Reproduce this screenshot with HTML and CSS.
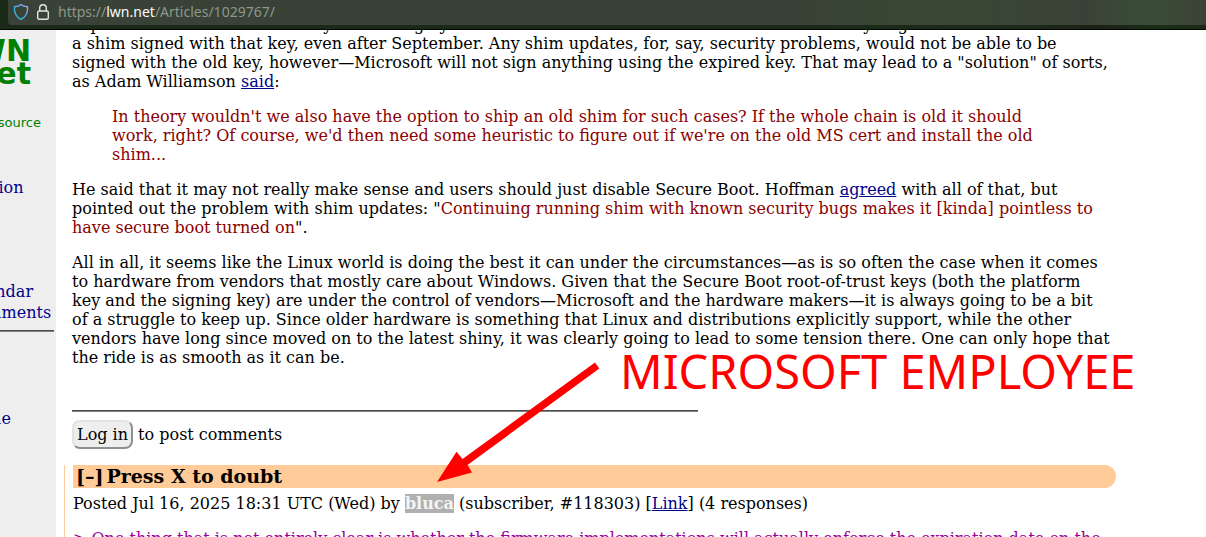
FILE: index.html
```
<!DOCTYPE html>
<html lang="en">
<head>
    <meta charset="UTF-8">
    <meta name="viewport" content="width=device-width, initial-scale=1.0">
    <title>LWN.net</title>
    <link rel="stylesheet" href="styles.css">
</head>
<body>
    <header class="toolbar">
        <div class="urlbar">
            <svg class="shield" width="16" height="18" viewBox="0 0 16 18" fill="none">
                <defs>
                    <linearGradient id="shieldColor" x1="0" y1="1" x2="1" y2="0">
                        <stop offset="0.35" stop-color="#35b5e8"/>
                        <stop offset="1" stop-color="#b09af0"/>
                    </linearGradient>
                </defs>
                <path d="M8 1.5C6.3 3 4 3.6 1.5 3.8C1 9.500 3.200 14 8 16.300C12.800 14 15 9.500 14.500 3.800C12 3.600 9.700 3 8 1.500Z" stroke="url(#shieldColor)" stroke-width="1.4" stroke-linejoin="round"/>
            </svg>
            <svg class="lock" width="14" height="18" viewBox="0 0 14 18" fill="none" stroke="#e3e6e2" stroke-width="1.4">
                <rect x="1.700" y="8" width="10.600" height="8.300" rx="1.500"/>
                <path d="M3.700 8V5A3.300 3.300 0 0 1 10.300 5V8"/>
            </svg>
            <div class="url">https://<span class="domain">lwn.net</span>/Articles/1029767/</div>
        </div>
    </header>

    <div class="page">
        <nav class="sidebar">
            <div class="menu">
                <div class="logo">LWN<br>.net</div>
                <div class="tagline">News from the source</div>
                <a class="edition" href="#">Weekly Edition</a>
                <ul class="links">
                    <li><a href="#">Events calendar</a></li>
                    <li><a href="#">Unread comments</a></li>
                </ul>
                <hr>
                <a class="headline" href="#">Past headline</a>
            </div>
        </nav>

        <main class="content">
            <div class="article">
                <p>
                    expired on that date others may continuing by the old certificates and the new ones with that they might<br>
                    a shim signed with that key, even after September. Any shim updates, for, say, security problems, would not be able to be signed with the old key, however—Microsoft will not sign anything using the expired key. That may lead to a "solution" of sorts, as Adam Williamson <a href="#">said</a>:
                </p>
                <blockquote>
                    In theory wouldn't we also have the option to ship an old shim for such cases? If the whole chain is old it should work, right? Of course, we'd then need some heuristic to figure out if we're on the old MS cert and install the old shim...
                </blockquote>
                <p>
                    He said that it may not really make sense and users should just disable Secure Boot. Hoffman <a href="#">agreed</a> with all of that, but pointed out the problem with shim updates: "<span class="quote">Continuing running shim with known security bugs makes it [kinda] pointless to have secure boot turned on</span>".
                </p>
                <p>
                    All in all, it seems like the Linux world is doing the best it can under the circumstances—as is so often the case when it comes to hardware from vendors that mostly care about Windows. Given that the Secure Boot root-of-trust keys (both the platform key and the signing key) are under the control of vendors—Microsoft and the hardware makers—it is always going to be a bit of a struggle to keep up. Since older hardware is something that Linux and distributions explicitly support, while the other vendors have long since moved on to the latest shiny, it was clearly going to lead to some tension there. One can only hope that the ride is as smooth as it can be.
                </p>
            </div>

            <hr class="divider">
            <form class="login">
                <button type="button">Log in</button> to post comments
            </form>

            <article class="comment">
                <h3><button type="button" class="toggle">[–]</button>Press X to doubt</h3>
                <p class="poster">Posted Jul 16, 2025 18:31 UTC (Wed) by <b>bluca</b> (subscriber, #118303) [<a href="#">Link</a>] (4 responses)</p>
                <p class="cited">&gt; One thing that is not entirely clear is whether the firmware implementations will actually enforce the expiration date on the</p>
            </article>
        </main>
    </div>

    <!-- annotation on top of the page -->
    <svg class="arrow" width="163" height="122" viewBox="0 0 163 122" fill="#ff0000">
        <path d="M158 0.500L162.300 6.500L30.500 103L35 110.500L0 120L19.500 89.700L25.500 97Z"/>
    </svg>
    <div class="note">MICROSOFT EMPLOYEE</div>
</body>
</html>
```

FILE: styles.css
```
body {
    margin: 0;
    height: 100vh;
    display: flex;
    flex-direction: column;
    overflow: hidden;
    position: relative;
    background: white;
    color: black;
    font-family: "DejaVu Serif", serif;
    font-size: 16px;
    line-height: 19px;
}
a {
    color: #00008b;
}
.toolbar {
    flex: none;
    padding: 0 0 4px 8px;
    background: linear-gradient(90deg, #1b2a18 75%, #1c2a19 85%, #1c2017 91%, #1b2d18 96%, #1c2a18);
    border-bottom: 1px solid #000a00;
}
.urlbar {
    display: flex;
    align-items: center;
    height: 23px;
    padding: 0 0 2px 5px;
    border-radius: 0 0 0 4px;
    background: linear-gradient(90deg, #384236 65%, #384833 78%, #3a4436 86%, #3a4237 90%, #384c37 94%, #3a4a36 97%, #3a4236);
}
.lock {
    margin: 0 8px 0 7px;
}
.url {
    font-family: "Noto Sans", sans-serif;
    font-size: 14px;
    color: #8f978d;
}
.domain {
    color: #fbfbfe;
}
.page {
    flex: 1;
    display: flex;
    min-height: 0;
    overflow: hidden;
}
.sidebar {
    flex: none;
    width: 56px;
    display: flex;
    justify-content: flex-end;
    overflow: hidden;
    background: #eeeeee;
}
.menu {
    flex: none;
    width: 152px;
    padding: 9px 2px 0 0;
}
.menu a {
    display: block;
    line-height: 21px;
    text-decoration: none;
}
.logo {
    padding-right: 23px;
    text-align: right;
    font: bold 30px/23px "DejaVu Sans", sans-serif;
    color: #008000;
}
.tagline {
    display: flex;
    justify-content: flex-end;
    margin-top: 28px;
    padding-right: 13px;
    font: 13px/19px "DejaVu Sans", sans-serif;
    color: #008000;
    white-space: nowrap;
}
.edition {
    margin-top: 45px;
}
.links {
    margin: 83px 0 7px;
    padding: 0;
    list-style: none;
}
.menu hr {
    margin: 0;
}
.headline {
    margin-top: 76px;
}
hr {
    border: 0;
    height: 2px;
    background: linear-gradient(#4c4c4c 50%, #808080 50%);
}
.content {
    flex: 1;
    margin-top: -15px;
    padding: 0 90px 0 16px;
}
.article {
    padding-right: 4px;
}
.content p {
    margin: 0 0 16px;
}
blockquote {
    margin: 16px 40px;
    color: #8b0000;
}
.quote {
    color: #8b0000;
}
.divider {
    width: 60%;
    margin: 43px 0 8px;
}
.login {
    margin-bottom: 16px;
}
.login button {
    padding: 3px;
    border: 2px outset #e3e3e3;
    border-radius: 8px;
    background: #eeeeee;
    font: inherit;
    color: black;
}
.comment {
    margin-left: -8px;
    padding-left: 8px;
    border-left: 1px solid #ffcc99;
}
.comment h3 {
    margin: 0 0 6px;
    padding-left: 3px;
    border-radius: 0 12px 12px 0;
    background: #ffcc99;
    font-size: 19px;
    line-height: 23px;
}
.toggle {
    margin-right: 3px;
    padding: 0;
    border: 0;
    background: none;
    font: inherit;
    color: black;
}
.poster b {
    background: #b0b0b0;
    color: #f4f4f4;
}
.cited {
    color: #990099;
    white-space: nowrap;
}
.arrow {
    position: absolute;
    left: 437px;
    top: 362px;
}
.note {
    position: absolute;
    left: 620px;
    top: 339px;
    font: 47px/65px "Noto Sans", sans-serif;
    color: #ff0000;
    white-space: nowrap;
}
```
